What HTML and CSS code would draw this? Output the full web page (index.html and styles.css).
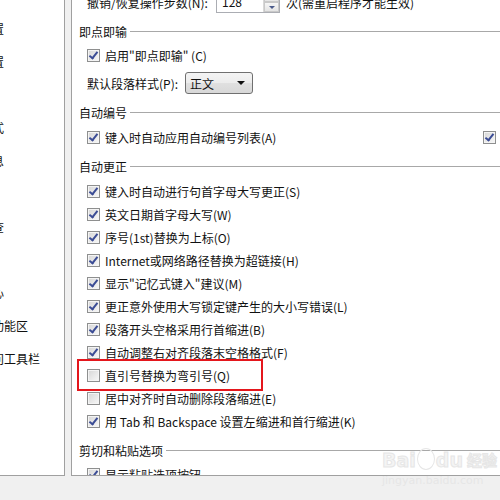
FILE: index.html
```html
<!DOCTYPE html>
<html lang="zh-CN">

<head>
    <meta charset="UTF-8">
    <title>Word 选项 - 高级</title>
    <link rel="stylesheet" href="styles.css">
</head>

<body>
    <div class="dialog">
        <div class="nav">
            <div class="nav-item">常规设置</div>
            <div class="nav-item">显示设置</div>
            <div class="nav-item">校对</div>
            <div class="nav-item">文档格式</div>
            <div class="nav-item">个人信息</div>
            <div class="nav-item">保存</div>
            <div class="nav-item">拼写检查</div>
            <div class="nav-item">高级</div>
            <div class="nav-item">信任中心</div>
            <div class="nav-item">自定义功能区</div>
            <div class="nav-item">快速访问工具栏</div>
        </div>

        <div class="panel">
            <div class="row top-row">
                <span class="label undo-label">撤销/恢复操作步数(N):</span>
                <span class="spin">
                    <span class="spin-value">128</span>
                    <span class="spin-btns">
                        <span class="spin-btn"><i class="arrow up"></i></span>
                        <span class="spin-btn"><i class="arrow down"></i></span>
                    </span>
                </span>
                <span class="label spin-after">次(需重启程序才能生效)</span>
            </div>

            <div class="group-title first">即点即输</div>
            <div class="option tight"><span class="box on"></span>启用"即点即输" (C)</div>
            <div class="row select-row">
                <span class="label select-label">默认段落样式(P):</span>
                <span class="select">正文<i class="arrow down dark"></i></span>
            </div>

            <div class="group-title">自动编号</div>
            <div class="option pair">
                <span class="cell"><span class="box on"></span>键入时自动应用自动编号列表(A)</span>
                <span class="cell"><span class="box on"></span>键入时自动应用项目符号列表</span>
            </div>

            <div class="group-title">自动更正</div>
            <div class="option"><span class="box on"></span>键入时自动进行句首字母大写更正(S)</div>
            <div class="option"><span class="box on"></span>英文日期首字母大写(W)</div>
            <div class="option"><span class="box on"></span>序号(1st)替换为上标(O)</div>
            <div class="option"><span class="box on"></span>Internet或网络路径替换为超链接(H)</div>
            <div class="option"><span class="box on"></span>显示"记忆式键入"建议(M)</div>
            <div class="option"><span class="box on"></span>更正意外使用大写锁定键产生的大小写错误(L)</div>
            <div class="option"><span class="box on"></span>段落开头空格采用行首缩进(B)</div>
            <div class="option"><span class="box on"></span>自动调整右对齐段落末空格格式(F)</div>
            <div class="option marked"><span class="box"></span>直引号替换为弯引号(Q)</div>
            <div class="option"><span class="box"></span>居中对齐时自动删除段落缩进(E)</div>
            <div class="option"><span class="box on"></span>用 Tab 和 Backspace 设置左缩进和首行缩进(K)</div>

            <div class="group-title">剪切和粘贴选项</div>
            <div class="option tight"><span class="box on"></span>显示粘贴选项按钮</div>
        </div>
    </div>

    <div class="watermark">
        <div class="wm-logo">Bai<span class="paw"></span>du <span class="wm-cn">经验</span></div>
        <div class="wm-url">jingyan.baidu.com</div>
    </div>
</body>

</html>
```

FILE: styles.css
```css
body {
    margin: 0;
    width: 500px;
    height: 500px;
    overflow: hidden;
    position: relative;
    background-color: #f0f0f0;
    font-family: "Noto Sans CJK SC", "Noto Sans", sans-serif;
    font-size: 12px;
    color: #111;
}

.dialog {
    display: flex;
    gap: 6px;
    height: 487px;
    margin-top: -11px;
    margin-left: -54px;
}

/* left navigation, cut off by the window edge */
.nav {
    flex: 0 0 119px;
    background: white;
    border-right: 1px solid #a0a0a0;
    border-bottom: 1px solid #a0a0a0;
    padding: 23px 0 0 10px;
    box-sizing: border-box;
    overflow: hidden;
    white-space: nowrap;
}

.nav-item {
    height: 33px;
    line-height: 33px;
}

/* right options panel */
.panel {
    flex: 0 0 460px;
    background: white;
    border-left: 1px solid #a0a0a0;
    border-bottom: 1px solid #a0a0a0;
    padding-left: 7px;
    box-sizing: border-box;
    overflow: hidden;
    white-space: nowrap;
}

.row {
    display: flex;
    align-items: center;
    padding-left: 8px;
}

.top-row {
    height: 26px;
}

.undo-label {
    width: 129px;
}

.spin {
    display: flex;
    width: 64px;
    height: 22px;
    border: 1px solid #abadb3;
    box-sizing: border-box;
    background: white;
}

.spin-value {
    flex: 1;
    padding-left: 5px;
    line-height: 20px;
}

.spin-btns {
    display: flex;
    flex-direction: column;
    width: 15px;
    border-left: 1px solid #d8d8d8;
}

.spin-btn {
    flex: 1;
    display: flex;
    align-items: center;
    justify-content: center;
    background: linear-gradient(#f6f6f6, #e4e4e4);
    border: 1px solid #c9c9c9;
}

.arrow {
    width: 0;
    height: 0;
    border-left: 3px solid transparent;
    border-right: 3px solid transparent;
}

.arrow.up {
    border-bottom: 3px solid #4a5a8a;
}

.arrow.down {
    border-top: 3px solid #4a5a8a;
}

.arrow.dark {
    border-left-width: 4px;
    border-right-width: 4px;
    border-top: 4px solid #111;
}

.spin-after {
    margin-left: 6px;
}

.group-title {
    display: flex;
    align-items: center;
    height: 23px;
    margin-top: 6px;
}

.group-title.first {
    margin-top: 5px;
}

.group-title::after {
    content: "";
    flex: 1;
    height: 1px;
    margin-left: 3px;
    background: #a8a8a8;
}

.option {
    display: flex;
    align-items: center;
    height: 23px;
    padding-left: 8px;
}

.group-title + .option {
    margin-top: 2px;
}

.group-title + .option.tight {
    margin-top: 1px;
}

.option.pair .cell {
    display: flex;
    align-items: center;
    width: 396px;
    flex-shrink: 0;
}

.option.marked {
    position: relative;
}

.option.marked::after {
    content: "";
    position: absolute;
    left: -2px;
    top: -5px;
    width: 186px;
    height: 32px;
    border: 2px solid #e4161c;
    box-sizing: border-box;
}

.box {
    position: relative;
    width: 13px;
    height: 13px;
    margin-right: 5px;
    border: 1px solid #8e8f8f;
    box-sizing: border-box;
    background: linear-gradient(135deg, #d6d6d6, #f8f8f8);
    box-shadow: inset 0 0 0 1px #f4f4f4;
    flex-shrink: 0;
}

.box.on::after {
    content: "";
    position: absolute;
    left: 3px;
    top: 0;
    width: 3px;
    height: 7px;
    border-right: 2px solid #3b4c95;
    border-bottom: 2px solid #3b4c95;
    transform: rotate(38deg);
}

.select-row {
    height: 24px;
    margin-top: 4px;
}

.select-label {
    width: 98px;
}

.select {
    display: flex;
    align-items: center;
    justify-content: space-between;
    width: 68px;
    height: 22px;
    padding: 0 7px 0 4px;
    border: 1px solid #707070;
    border-radius: 3px;
    box-sizing: border-box;
    background: linear-gradient(#f4f4f4, #ececec 50%, #e0e0e0 51%, #d8d8d8);
}

/* faint site watermark over the corner */
.watermark {
    position: absolute;
    left: 382px;
    top: 446px;
    color: #f4f4f4;
    font-family: "DejaVu Sans", sans-serif;
    pointer-events: none;
}

.wm-logo {
    display: flex;
    align-items: flex-end;
    font-size: 19px;
    font-weight: bold;
    line-height: 28px;
    -webkit-text-stroke: 1px #e6e6e6;
}

.paw {
    width: 18px;
    height: 22px;
    margin: 0 1px 4px;
    border-radius: 50%;
    border: 1px solid #e6e6e6;
    box-sizing: border-box;
}

.wm-cn {
    font-family: "Noto Sans CJK SC", sans-serif;
    font-size: 15px;
    margin-left: 4px;
}

.wm-url {
    font-size: 11px;
    line-height: 14px;
    color: #e6e6e6;
}
```
